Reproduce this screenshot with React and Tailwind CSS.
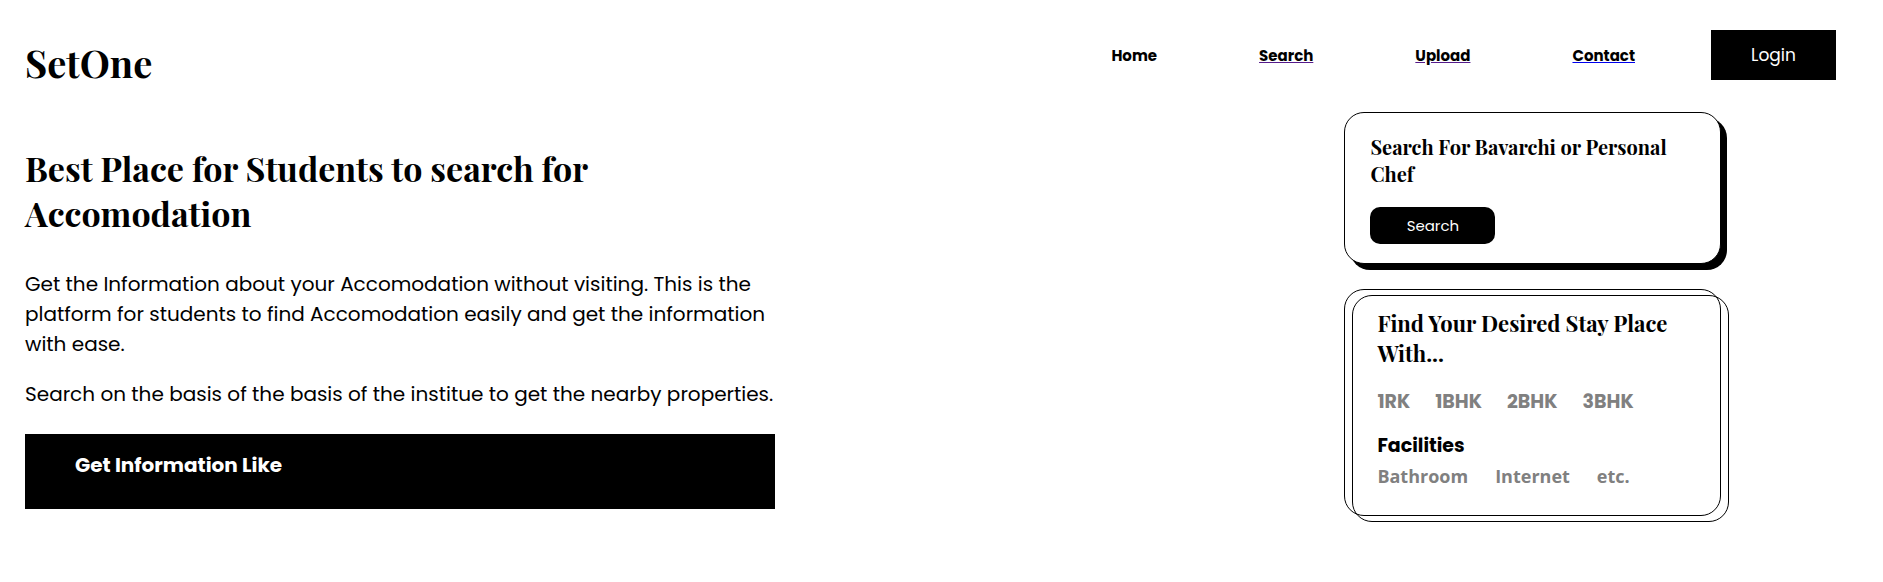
const navLinks = [
  { label: 'Search', line: 'decoration-[#551a8b]' },
  { label: 'Upload', line: 'decoration-[#551a8b]' },
  { label: 'Contact', line: 'decoration-[#0000ee]' },
];

const roomTypes = ['1RK', '1BHK', '2BHK', '3BHK'];
const facilities = ['Bathroom', 'Internet', 'etc.'];

const serif = "font-['Playfair_Display','Liberation_Serif',serif] font-bold";

function Header() {
  return (
    <header className="flex items-start justify-between pt-[30px] pr-[47px] pl-[25px]">
      <a href="#home" className={`${serif} pt-2 text-[38px] leading-[50px]`}>
        SetOne
      </a>
      <nav className="flex items-center gap-[76px]">
        <ul className="flex items-center gap-[102px] pt-0.5 text-[15px] leading-[22px] font-bold">
          <li>
            <a href="#home">Home</a>
          </li>
          {navLinks.map(({ label, line }) => (
            <li key={label}>
              <a href={`#${label.toLowerCase()}`} className={`underline ${line}`}>
                {label}
              </a>
            </li>
          ))}
        </ul>
        <button type="button" className="h-[50px] w-[125px] bg-black pt-0.5 text-[17px] text-white">
          Login
        </button>
      </nav>
    </header>
  );
}

function Intro() {
  return (
    <section className="ml-[25px] w-[750px] shrink pt-[34px]">
      <h1 className={`${serif} text-[34px] leading-[45px]`}>
        Best Place for Students to search for Accomodation
      </h1>
      <p className="mt-[33px] text-xl leading-[30px]">
        Get the Information about your Accomodation without visiting. This is the platform for
        students to find Accomodation easily and get the information with ease.
      </p>
      <p className="mt-5 text-xl leading-[30px]">
        Search on the basis of the basis of the institue to get the nearby properties.
      </p>
      <div className="mt-[25px] bg-black px-[50px] pt-4 pb-[29px] text-white">
        <h2 className="text-xl leading-[30px] font-bold">Get Information Like</h2>
      </div>
    </section>
  );
}

function Cards() {
  return (
    <aside className="mr-[162px] flex w-1/5 shrink-0 flex-col gap-[25px]">
      <section className="rounded-[20px] border border-black bg-white px-[25px] pt-5 pb-[19px] shadow-[6px_6px_0_0_#000]">
        <h2 className={`${serif} text-xl leading-[27px]`}>Search For Bavarchi or Personal Chef</h2>
        <button
          type="button"
          className="mt-5 block h-[37px] w-[125px] rounded-[10px] bg-black pt-0.5 text-[15px] text-white"
        >
          Search
        </button>
      </section>

      <section className="relative rounded-[20px] border border-black pt-[18px] pr-4 pb-6 pl-8">
        <div
          aria-hidden="true"
          className="pointer-events-none absolute top-[5px] -right-[9px] -bottom-[7px] left-[7px] rounded-[20px] border border-black"
        />
        <h2 className={`${serif} text-[22px] leading-[30px]`}>
          Find Your Desired Stay Place With...
        </h2>
        <ul className="mt-[19px] flex gap-[25px] text-[19px] leading-[30px] font-bold text-[#808080]">
          {roomTypes.map((room) => (
            <li key={room}>{room}</li>
          ))}
        </ul>
        <h3 className="mt-3.5 text-[19px] leading-[30px] font-bold">Facilities</h3>
        <ul className="flex gap-[27px] font-['Open_Sans',sans-serif] text-lg leading-[30px] font-bold text-[#808080]">
          {facilities.map((facility) => (
            <li key={facility}>{facility}</li>
          ))}
        </ul>
      </section>
    </aside>
  );
}

export default function App() {
  return (
    <div className="min-h-screen bg-white font-['Poppins','Inter',sans-serif] text-black">
      <Header />
      <main className="flex items-start justify-between pt-6">
        <Intro />
        <Cards />
      </main>
    </div>
  );
}
